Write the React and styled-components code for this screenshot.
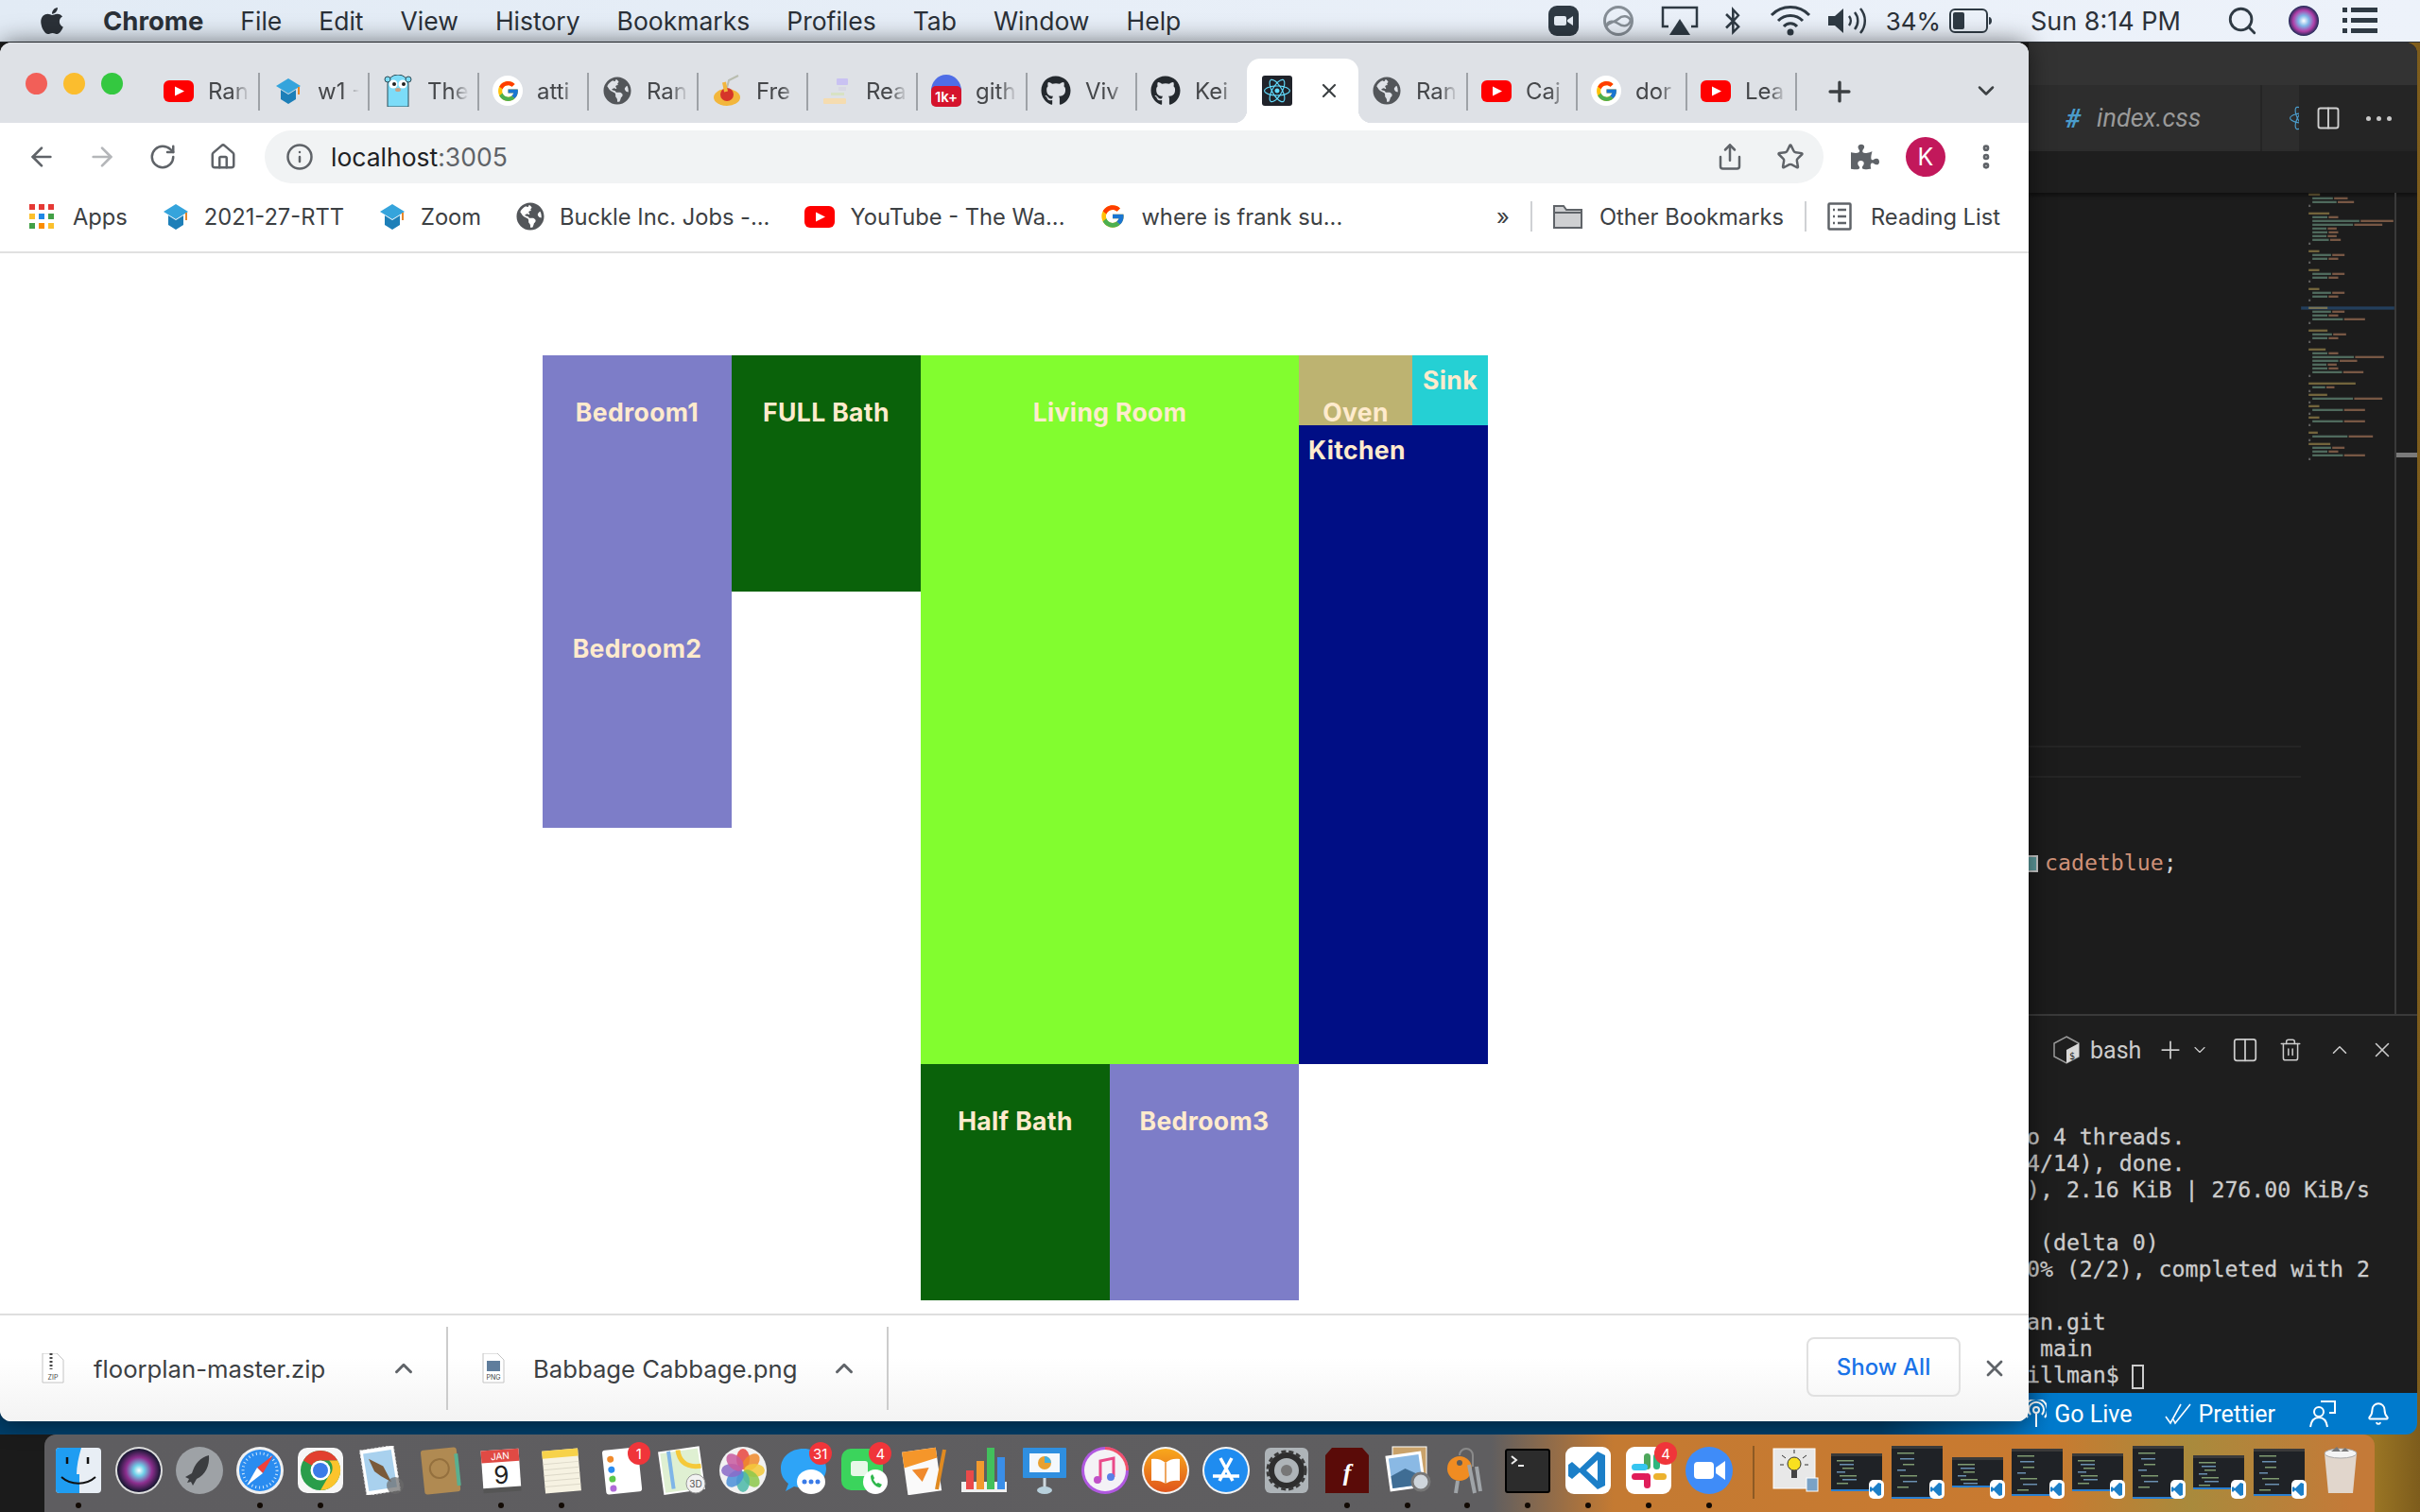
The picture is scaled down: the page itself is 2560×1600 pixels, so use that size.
import React from 'react';
import styled, { createGlobalStyle } from 'styled-components';
import {
    ArrowLeft, ArrowRight, RotateCw, House, Info, Star, Share, EllipsisVertical, Plus, ChevronDown, ChevronUp, X,
    Search, Bell, Columns2, Trash2,
} from 'lucide-react';
import { FaApple, FaGithub, FaPuzzlePiece, FaReact, FaGlobeAmericas, FaBluetoothB } from 'react-icons/fa';
import { FcGoogle } from 'react-icons/fc';

const GlobalStyle = createGlobalStyle`
    html, body { margin: 0; padding: 0; background: #1c1c1c; }
    body { width: 2560px; height: 1600px; overflow: hidden; font-family: Inter, "Noto Sans", sans-serif; }
    * { box-sizing: border-box; }
`;

const Desktop = styled.div`
    position: relative;
    width: 2560px;
    height: 1600px;
    overflow: hidden;
    background: linear-gradient(90deg, #1b1b1b 0, #1b1b1b 2300px, #9a7524 2512px, #7d5c1c 2560px);
`;

/* ---- mac menu bar ---- */
const MenuBar = styled.div`
    display: flex;
    align-items: center;
    height: 45px;
    padding: 0 45px 0 39px;
    background: linear-gradient(90deg, #e2ebf5, #edf2fa);
    border-bottom: 1px solid #2d3238;
    color: #2b3138;
    font-size: 26.5px;
`;
const MenuItem = styled.span`
    margin-left: ${(p) => p.$gap || 39}px;
    font-weight: ${(p) => (p.$bold ? 700 : 400)};
    font-size: ${(p) => (p.$bold ? 27.5 : 26.5)}px;
    white-space: nowrap;
`;
const Tray = styled.div`
    display: flex;
    align-items: center;
    margin-left: auto;
`;
const TraySlot = styled.span`
    display: flex;
    align-items: center;
    justify-content: center;
    margin-left: ${(p) => p.$gap || 0}px;
    font-size: ${(p) => p.$size || 27}px;
    white-space: nowrap;
`;

/* ---- vs code behind the browser ---- */
const StatusStrip = styled.div`
    position: absolute;
    left: 0;
    top: 1474px;
    width: 2557px;
    height: 44px;
    padding-right: 28px;
    display: flex;
    align-items: center;
    justify-content: flex-end;
    border-radius: 0 0 12px 0;
    color: #fff;
    font-family: Roboto, sans-serif;
    font-size: 25px;
    background: linear-gradient(90deg, #003e69 0, #003e69 1990px, #007acc 2170px);
`;
const StatusItem = styled.span`
    display: flex;
    align-items: center;
    gap: 8px;
    margin-left: ${(p) => p.$gap || 0}px;
`;
const CodeWindow = styled.div`
    position: absolute;
    left: 2146px;
    top: 45px;
    width: 411px;
    height: 1429px;
    display: flex;
    flex-direction: column;
    overflow: hidden;
    border-radius: 0 12px 0 0;
    background: #1e1e1e;
`;
const CodeTitle = styled.div`
    height: 45px;
    flex: none;
    background: #333;
`;
const CodeTabs = styled.div`
    height: 70px;
    flex: none;
    display: flex;
    background: #252525;
`;
const CodeTab = styled.div`
    width: 247px;
    padding-left: 39px;
    display: flex;
    align-items: center;
    gap: 17px;
    background: #2d2d2d;
    border-right: 2px solid #252525;
    color: #9a9a9a;
    font-family: Roboto, sans-serif;
    font-size: 27px;
    font-style: italic;
`;
const Hash = styled.span`
    color: #4a9ccb;
    font-weight: 700;
    font-style: italic;
    font-size: 28px;
`;
const NextTab = styled.div`
    width: 39px;
    display: flex;
    align-items: center;
    justify-content: flex-end;
    background: #2d2d2d;
    overflow: hidden;
    color: #4a9ccb;
`;
const TabActions = styled.div`
    flex: 1;
    display: flex;
    align-items: center;
    padding-left: 17px;
    gap: 26px;
    color: #d0d0d0;
`;
const Dots = styled.span`
    display: flex;
    gap: 6px;
`;
const Dot = styled.i`
    width: 5px;
    height: 5px;
    border-radius: 50%;
    background: #c8c8c8;
`;
const Crumbs = styled.div`
    height: 44px;
    flex: none;
    background: #1e1e1e;
    box-shadow: 0 3px 4px rgba(0, 0, 0, 0.45);
    position: relative;
`;
const Editor = styled.div`
    height: 871px;
    flex: none;
    display: flex;
    background: #1c1c1c;
    border-bottom: 2px solid #3a3a3a;
`;
const EditorText = styled.div`
    width: 288px;
    flex: none;
    padding-top: 695px;
    font-family: "DejaVu Sans Mono", monospace;
    font-size: 23.2px;
    line-height: 28px;
    color: #d4d4d4;
    background: linear-gradient(180deg, #252525 0, #252525 2px, transparent 2px, transparent 32px, #252525 32px) 0 585px / 100% 34px no-repeat;
`;
const Swatch = styled.i`
    display: inline-block;
    width: 10px;
    height: 18px;
    margin-right: 7px;
    vertical-align: -2px;
    background: #5f9ea0;
    border: 2px solid #ccc;
    border-left: 0;
`;
const CssValue = styled.span`
    color: #ce9178;
`;
const MiniMap = styled.svg`
    width: 99px;
    height: 300px;
    flex: none;
`;
const ScrollGutter = styled.div`
    flex: 1;
    position: relative;
    border-left: 2px solid #3a3a3a;
    &::after {
        content: '';
        position: absolute;
        left: 0;
        right: 0;
        top: 275px;
        height: 5px;
        background: #7a7a7a;
    }
`;
const PanelBar = styled.div`
    height: 72px;
    flex: none;
    display: flex;
    align-items: center;
    padding-left: 26px;
    color: #ccc;
    font-family: Roboto, sans-serif;
    font-size: 25px;
`;
const PanelSlot = styled.span`
    display: flex;
    align-items: center;
    margin-left: ${(p) => p.$gap || 0}px;
`;
const Terminal = styled.pre`
    flex: 1;
    margin: 0 0 0 -2px;
    padding: 42px 0 0 0;
    font-family: "DejaVu Sans Mono", monospace;
    font-size: 23.2px;
    line-height: 28px;
    color: #cccccc;
    -webkit-text-stroke: 0.3px #cccccc;
`;
const Cursor = styled.i`
    display: inline-block;
    width: 13px;
    height: 26px;
    margin-left: 13px;
    vertical-align: -7px;
    border: 2px solid #ccc;
`;

/* ---- chrome window ---- */
const ChromeWindow = styled.div`
    position: absolute;
    left: 0;
    top: 45px;
    width: 2146px;
    height: 1459px;
    display: flex;
    flex-direction: column;
    overflow: hidden;
    border-radius: 12px;
    background: #fff;
    box-shadow: 0 0 26px rgba(0, 0, 0, 0.55);
`;
const TabStrip = styled.div`
    height: 85px;
    flex: none;
    display: flex;
    align-items: flex-end;
    padding-left: 27px;
    background: #dee1e6;
`;
const Lights = styled.div`
    display: flex;
    gap: 17px;
    width: 132px;
    align-self: flex-start;
    margin-top: 32px;
`;
const Light = styled.span`
    width: 23px;
    height: 23px;
    border-radius: 50%;
    background: ${(p) => p.$color};
`;
const Tab = styled.div`
    position: relative;
    width: ${(p) => (p.$active ? 118 : 116)}px;
    height: 68px;
    flex: none;
    display: flex;
    align-items: center;
    gap: ${(p) => (p.$active ? 27 : 15)}px;
    padding-left: ${(p) => (p.$active ? 16 : 14)}px;
    border-radius: 14px 14px 0 0;
    background: ${(p) => (p.$active ? '#fff' : 'transparent')};
    color: #45474a;
    font-size: 24px;
    &::after {
        content: '';
        display: ${(p) => (p.$active || p.$noSep ? 'none' : 'block')};
        position: absolute;
        right: 0;
        top: 15px;
        height: 40px;
        width: 2px;
        background: #9ea2a7;
    }
`;
const Flare = styled.i`
    position: absolute;
    bottom: 0;
    ${(p) => (p.$side === 'left' ? 'left: -14px' : 'right: -14px')};
    width: 14px;
    height: 14px;
    background: radial-gradient(circle at ${(p) => (p.$side === 'left' ? '0 0' : '100% 0')}, transparent 14px, #fff 14.5px);
`;
const TabIcon = styled.span`
    width: 32px;
    height: 34px;
    flex: none;
    display: flex;
    align-items: center;
    justify-content: center;
`;
const TabTitle = styled.span`
    width: 44px;
    overflow: hidden;
    white-space: nowrap;
    -webkit-mask-image: linear-gradient(90deg, #000 58%, transparent 100%);
    mask-image: linear-gradient(90deg, #000 58%, transparent 100%);
`;
const NewTab = styled.span`
    margin: 0 0 16px 28px;
    display: flex;
    color: #3c4043;
`;
const TabMenu = styled.span`
    margin: 0 31px 20px auto;
    display: flex;
    color: #3c4043;
`;
const Toolbar = styled.div`
    height: 72px;
    flex: none;
    display: flex;
    align-items: center;
    padding-left: 12px;
    background: #fff;
    color: #5f6368;
`;
const ToolButton = styled.span`
    width: 64px;
    display: flex;
    justify-content: center;
    margin-left: ${(p) => (p.$push ? 'auto' : '0')};
    color: ${(p) => p.$color || '#5f6368'};
`;
const UrlBar = styled.div`
    width: 1649px;
    height: 56px;
    margin: 0 12px;
    padding: 0 3px 0 22px;
    display: flex;
    align-items: center;
    border-radius: 28px;
    background: #f1f3f4;
`;
const UrlText = styled.span`
    margin-left: 18px;
    font-size: 26.5px;
    color: #202124;
`;
const UrlPort = styled.span`
    color: #5f6368;
`;
const Avatar = styled.span`
    width: 42px;
    height: 42px;
    display: flex;
    align-items: center;
    justify-content: center;
    border-radius: 50%;
    background: #c2185b;
    color: #fff;
    font-size: 25px;
`;
const BookmarkBar = styled.div`
    height: 66px;
    flex: none;
    display: flex;
    align-items: center;
    gap: 37px;
    padding: 0 30px 10px 31px;
    border-bottom: 2px solid #e0e0e0;
    background: #fff;
    color: #3c4043;
    font-size: 23.7px;
`;
const Bookmark = styled.span`
    display: flex;
    align-items: center;
    gap: ${(p) => p.$gap || 16}px;
    white-space: nowrap;
    margin-left: ${(p) => (p.$push ? 'auto' : '0')};
`;
const BarRule = styled.i`
    width: 2px;
    height: 32px;
    margin: 0 -15px;
    background: #cfd1d4;
`;
const AppsGrid = styled.span`
    display: grid;
    grid-template-columns: repeat(3, 6px);
    grid-auto-rows: 6px;
    gap: 4px;
`;
const AppsDot = styled.i`
    background: ${(p) => p.$color};
`;

/* ---- the floor plan page ---- */
const Page = styled.div`
    flex: 1;
    overflow: hidden;
    background: #fff;
`;
const FloorPlan = styled.div`
    display: grid;
    grid-template-columns: repeat(5, 200px);
    grid-template-rows: repeat(4, 250px);
    width: 1000px;
    height: 1000px;
    margin: 108px 0 0 574px;
    text-align: center;
    color: #ffebcd;
`;
const Room = styled.div`
    grid-column: ${(p) => p.$col};
    grid-row: ${(p) => p.$row};
    background: ${(p) => p.$bg};
`;
const RoomName = styled.h5`
    margin: ${(p) => p.$margin || '44px 0'};
    font-size: 26.56px;
    font-weight: 700;
    line-height: 32px;
    letter-spacing: 0.35px;
    text-align: ${(p) => p.$align || 'center'};
`;
const Kitchen = styled.div`
    grid-column: 5;
    grid-row: 1 / 4;
    display: grid;
    grid-template-columns: 120px 80px;
    grid-template-rows: 74px 1fr;
    background: #000e85;
`;
const KitchenFloor = styled.div`
    grid-column: 1 / 3;
`;

/* ---- downloads shelf ---- */
const Shelf = styled.div`
    height: 114px;
    flex: none;
    display: flex;
    align-items: center;
    padding-right: 22px;
    border-top: 2px solid #dedede;
    background: linear-gradient(180deg, #fff 40%, #f3f3f3);
    color: #3c4043;
    font-size: 25.7px;
`;
const ShelfFile = styled.div`
    width: ${(p) => p.$width}px;
    height: 88px;
    display: flex;
    align-items: center;
    padding-left: ${(p) => p.$pad}px;
    border-right: 2px solid #ccc;
`;
const ShelfName = styled.span`
    margin-left: ${(p) => p.$gap}px;
    white-space: nowrap;
`;
const ShelfCaret = styled.span`
    display: flex;
    margin-left: auto;
    margin-right: ${(p) => p.$right}px;
    color: #5f6368;
`;
const ShowAll = styled.button`
    margin: 0 0 3px auto;
    width: 163px;
    height: 63px;
    border: 2px solid #e0e0e0;
    border-radius: 8px;
    background: transparent;
    color: #1a73e8;
    font: 500 24px Inter, sans-serif;
`;
const ShelfClose = styled.span`
    display: flex;
    margin-left: 22px;
    color: #5f6368;
`;

/* ---- dock ---- */
const Dock = styled.div`
    position: absolute;
    left: 47px;
    top: 1518px;
    width: 2465px;
    height: 82px;
    display: flex;
    padding: 12px 0 0 4px;
    border-radius: 12px 12px 0 0;
    background: linear-gradient(90deg, #5e5d60 0, #5f5e60 1530px, #c47a32 1660px, #c97a30 2120px, #a98a3c 2270px, #c47a38 2440px);
`;
const DockItem = styled.div`
    position: relative;
    width: 63.9px;
    flex: none;
    display: flex;
    flex-direction: column;
    align-items: center;
`;
const DockDot = styled.i`
    width: 6px;
    height: 6px;
    margin-top: 8px;
    border-radius: 50%;
    background: ${(p) => (p.$on ? '#120a04' : 'transparent')};
`;
const DockBadge = styled.span`
    position: absolute;
    top: -4px;
    right: 2px;
    min-width: 24px;
    height: 24px;
    display: flex;
    align-items: center;
    justify-content: center;
    border-radius: 12px;
    background: #f0353a;
    color: #fff;
    font-size: 15px;
`;
const DockRule = styled.i`
    width: 2px;
    height: 56px;
    margin: 0 13px 0 14px;
    flex: none;
    background: #8d5a24;
`;

const Yt = () => (
    <svg width="32" height="23" viewBox="0 0 32 23">
        <rect width="32" height="23" rx="6" fill="#f00" />
        <path d="M12 6.5 22 11.5 12 16.5z" fill="#fff" />
    </svg>
);
const Cap = () => (
    <svg width="28" height="30" viewBox="0 0 28 30">
        <path d="M14 2 27 10 14 18 1 10z" fill="#35a4dc" />
        <path d="M6 14 14 19 22 14V24L14 29 6 24z" fill="#1d7fb8" />
        <path d="M24 11h2v8h-2z" fill="#e8872a" />
    </svg>
);
const Gopher = () => (
    <svg width="30" height="34" viewBox="0 0 30 34">
        <path d="M4 10a11 10 0 0 1 22 0V34H4z" fill="#7cdcf8" stroke="#2b4a55" />
        <circle cx="4" cy="5" r="3" fill="#7cdcf8" stroke="#2b4a55" />
        <circle cx="26" cy="5" r="3" fill="#7cdcf8" stroke="#2b4a55" />
        <circle cx="10" cy="10" r="4.5" fill="#fff" />
        <circle cx="20" cy="10" r="4.5" fill="#fff" />
        <circle cx="11" cy="10" r="2" fill="#222" />
        <circle cx="21" cy="10" r="2" fill="#222" />
        <ellipse cx="15" cy="16" rx="3" ry="2" fill="#c9a184" />
    </svg>
);
const GoogleDot = styled.span`
    width: 32px;
    height: 32px;
    display: flex;
    align-items: center;
    justify-content: center;
    border-radius: 50%;
    background: #fff;
`;
const Google = () => (
    <GoogleDot>
        <FcGoogle size={25} />
    </GoogleDot>
);
const Globe = () => <FaGlobeAmericas size={30} color="#53565a" />;
const Pasta = () => (
    <svg width="30" height="34" viewBox="0 0 30 34">
        <path d="M14 18 17 6 27 1" fill="none" stroke="#b9bdb0" strokeWidth="2" />
        <ellipse cx="15" cy="24" rx="14" ry="9" fill="#f2b63c" />
        <circle cx="15" cy="21" r="7" fill="#d6352a" />
        <path d="M12 8 14 18" stroke="#f2b63c" strokeWidth="4" />
    </svg>
);
const Rea = () => (
    <svg width="32" height="32" viewBox="0 0 32 32">
        <rect x="16" y="3" width="12" height="7" rx="1" fill="#c9c2f2" />
        <rect x="18" y="12" width="8" height="4" fill="#d8d8e4" />
        <rect x="10" y="18" width="14" height="3" fill="#d7e2c4" />
        <rect x="2" y="24" width="24" height="6" rx="1" fill="#f5dcb0" />
    </svg>
);
const OneK = styled.span`
    position: absolute;
    left: 0;
    bottom: 0;
    width: 32px;
    height: 22px;
    display: flex;
    align-items: center;
    justify-content: center;
    border-radius: 5px;
    background: #d5132c;
    color: #fff;
    font-size: 15px;
    font-weight: 600;
`;
const GitBubble = styled.span`
    position: relative;
    width: 32px;
    height: 34px;
    border-radius: 50%;
    background: #4f6de6;
`;
const Notify = () => (
    <GitBubble>
        <OneK>1k+</OneK>
    </GitBubble>
);
const ReactIcon = styled.span`
    width: 32px;
    height: 32px;
    display: flex;
    align-items: center;
    justify-content: center;
    background: #20232a;
    border-radius: 3px;
    color: #61dafb;
`;

const tabs = [
    [<Yt />, 'Ran'], [<Cap />, 'w1 -'], [<Gopher />, 'The'], [<Google />, 'atti'], [<Globe />, 'Ran'],
    [<Pasta />, 'Fre'], [<Rea />, 'Rea'], [<Notify />, 'gith'], [<FaGithub size={32} color="#24292e" />, 'Viv'],
    [<FaGithub size={32} color="#24292e" />, 'Kei'],
];
const tabsAfter = [[<Globe />, 'Ran'], [<Yt />, 'Caj'], [<Google />, 'dor'], [<Yt />, 'Lea']];
const appsColors = ['#e53935', '#e53935', '#e53935', '#fbc02d', '#1e88e5', '#43a047', '#43a047', '#fb8c00', '#fbc02d'];

const ZoomTray = () => (
    <svg width="32" height="32" viewBox="0 0 32 32">
        <rect width="32" height="32" rx="9" fill="#2f3a44" />
        <rect x="6" y="11" width="13" height="10" rx="2" fill="#e6edf5" />
        <path d="M20 15 26 11V21L20 17z" fill="#e6edf5" />
    </svg>
);
const CloudTray = () => (
    <svg width="38" height="32" viewBox="0 0 38 32" fill="none" stroke="#868e96" strokeWidth="3">
        <circle cx="19" cy="16" r="14.500" />
        <path d="M6 22c2-7 9-6 13-3s10 4 13-3c-2-6-9-6-13-2s-10 3-13 8z" strokeWidth="2.500" />
    </svg>
);
const AirplayTray = () => (
    <svg width="40" height="32" viewBox="0 0 40 32" fill="none">
        <path d="M8 22H2V2H38V22H32" stroke="#2f3a44" strokeWidth="2.5" />
        <path d="M20 14 31 31H9z" fill="#2f3a44" />
    </svg>
);
const WifiTray = () => (
    <svg width="44" height="32" viewBox="0 0 44 32" fill="none" stroke="#2f3a44" strokeWidth="3">
        <path d="M2 10a28 28 0 0 1 40 0M9 16a18 18 0 0 1 26 0M15 22a9 9 0 0 1 14 0" />
        <circle cx="22" cy="28" r="2" fill="#2f3a44" />
    </svg>
);
const VolumeTray = () => (
    <svg width="42" height="32" viewBox="0 0 42 32" fill="none" stroke="#2f3a44" strokeWidth="2.5">
        <path d="M1 11H8L17 3V29L8 21H1z" fill="#2f3a44" stroke="none" />
        <path d="M23 11a8 8 0 0 1 0 10M29 7a14 14 0 0 1 0 18M35 3a20 20 0 0 1 0 26" />
    </svg>
);
const BatteryTray = () => (
    <svg width="45" height="26" viewBox="0 0 45 26">
        <rect x="1" y="1" width="39" height="24" rx="5" fill="none" stroke="#2f3a44" strokeWidth="2" />
        <rect x="4" y="4" width="12" height="18" rx="2" fill="#2f3a44" />
        <path d="M42 9c2 0 3 2 3 4s-1 4-3 4z" fill="#2f3a44" />
    </svg>
);
const SiriTray = () => (
    <svg width="32" height="32" viewBox="0 0 32 32">
        <defs>
            <radialGradient id="siriTray">
                <stop offset="0" stopColor="#fff" />
                <stop offset="0.35" stopColor="#7fb6e8" />
                <stop offset="0.7" stopColor="#b03ea8" />
                <stop offset="1" stopColor="#1c2a55" />
            </radialGradient>
        </defs>
        <circle cx="16" cy="16" r="16" fill="url(#siriTray)" />
    </svg>
);
const ListTray = () => (
    <svg width="37" height="28" viewBox="0 0 37 28" fill="#2f3a44">
        <rect width="5" height="5" />
        <rect y="11" width="5" height="5" />
        <rect y="22" width="5" height="5" />
        <rect x="9" width="28" height="5" />
        <rect x="9" y="11" width="28" height="5" />
        <rect x="9" y="22" width="28" height="5" />
    </svg>
);
const FolderIcon = () => (
    <svg width="31" height="26" viewBox="0 0 31 26">
        <path d="M1 2H11L14 6H30V25H1z" fill="#cfd0d2" stroke="#5f6368" strokeWidth="2" />
        <path d="M1 9H30" stroke="#5f6368" strokeWidth="2" />
    </svg>
);
const ReadingIcon = () => (
    <svg width="26" height="30" viewBox="0 0 26 30" fill="none" stroke="#5f6368" strokeWidth="2.5">
        <rect x="1.5" y="1.5" width="23" height="27" rx="1" />
        <path d="M6 8h2M11 8h9M6 15h2M11 15h9M6 22h2M11 22h9" />
    </svg>
);
const FileIcon = ({ label, zip }) => (
    <svg width="24" height="32" viewBox="0 0 24 32">
        <path d="M1 0H16L23 7V31H1z" fill="#fff" stroke="#c4c4c4" />
        {zip ? <path d="M10 0V17" stroke="#444" strokeWidth="3" strokeDasharray="2 2" /> : <rect x="5" y="8" width="14" height="11" fill="#5f7d9c" />}
        <text x="12" y="28" fontSize="7" textAnchor="middle" fill="#444" fontFamily="Inter">{label}</text>
    </svg>
);
const BashIcon = () => (
    <svg width="28" height="30" viewBox="0 0 28 30">
        <path d="M14 1 27 8V22L14 29 1 22V8z" fill="none" stroke="#9a9a9a" strokeWidth="1.5" />
        <path d="M14 15 27 8V22L14 29z" fill="#d8d8d8" />
        <text x="17" y="25" fontSize="10" fill="#222" fontFamily="DejaVu Sans Mono">$</text>
    </svg>
);
const PersonFeedback = () => (
    <svg width="28" height="30" viewBox="0 0 28 30" fill="none" stroke="#fff" strokeWidth="2">
        <circle cx="10" cy="13" r="5" />
        <path d="M1 29c1-7 4-10 9-10s8 3 9 10M12 2H27V14H21" />
    </svg>
);
const GoLiveIcon = () => (
    <svg width="22" height="30" viewBox="0 0 22 30" fill="none" stroke="#fff" strokeWidth="2">
        <circle cx="11" cy="11" r="3" />
        <path d="M5 16a8 8 0 1 1 12 0M2 19a12 12 0 1 1 18 0M11 15V29" />
    </svg>
);
const DoubleCheck = () => (
    <svg width="28" height="24" viewBox="0 0 28 24" fill="none" stroke="#fff" strokeWidth="1.6">
        <path d="M1 15 6 22 17 2M9 18 11 22 27 2" />
    </svg>
);

const mmRows = [
    [378, 0, 972], [390, 1, 1060], [402, 1, 1080], [414, 2, 942], [438, 0, 1002], [450, 1, 1030], [462, 1, 1205],
    [474, 1, 1170], [486, 1, 1025], [498, 1, 1030], [510, 1, 1025], [522, 1, 1038], [534, 2, 942], [558, 0, 970],
    [570, 1, 1050], [582, 1, 1030], [594, 2, 942], [618, 0, 970], [630, 1, 1050], [642, 1, 1030], [654, 2, 942],
    [678, 0, 970], [690, 1, 1050], [702, 1, 1030], [714, 2, 942], [738, 0, 996], [750, 1, 1050], [762, 1, 1030],
    [774, 1, 1115], [786, 2, 942], [810, 0, 996], [822, 1, 1055], [834, 1, 1030], [846, 2, 942], [870, 0, 990],
    [882, 1, 1030], [894, 1, 1175], [906, 1, 1090], [918, 1, 1025], [930, 1, 1030], [942, 1, 1110], [954, 2, 942],
    [978, 0, 1085], [990, 1, 1018], [1002, 2, 942], [1014, 0, 995], [1026, 1, 1170], [1038, 2, 942], [1050, 0, 970],
    [1062, 1, 1115], [1074, 2, 942], [1086, 0, 970], [1098, 1, 1115], [1110, 2, 942], [1134, 0, 965], [1146, 1, 1140],
    [1158, 2, 942], [1170, 0, 1005], [1182, 1, 1050], [1194, 1, 1030], [1206, 1, 1115], [1218, 2, 942],
];
const MiniMapArt = () => (
    <MiniMap viewBox="912 372 296 900">
        <rect x="912" y="733" width="296" height="10" fill="#264f78" opacity="0.7" />
        <g opacity="0.62">
            {mmRows.map(([y, kind, end]) => {
                const start = kind === 1 ? 948 : 936;
                const split = kind === 1 ? start + (end - start) * 0.58 : end;
                return (
                    <g key={y}>
                        <rect x={start} y={y - 4} width={split - start} height="7" fill={kind === 0 ? '#a89050' : kind === 1 ? '#6f9a85' : '#8a8a8a'} />
                        {kind === 1 && <rect x={split + 4} y={y - 4} width={end - split - 4} height="7" fill="#b07c5e" />}
                    </g>
                );
            })}
        </g>
    </MiniMap>
);

/* dock icons, all on a 52 box */
const Ic = ({ children, defs }) => (
    <svg width="52" height="52" viewBox="0 0 52 52">
        {defs && <defs>{defs}</defs>}
        {children}
    </svg>
);
const petals = ['#e8473f', '#f08a2c', '#f5c93a', '#8cc84b', '#4bb8a8', '#4a8fd8', '#8a6ac8', '#c85aa0'];
const dockIcons = {
    finder: (
        <Ic>
            <rect x="2" y="2" width="48" height="48" rx="4" fill="#e8eef5" />
            <path d="M6 2H29C26 12 24 22 24 30H27V50H6a4 4 0 0 1-4-4V6a4 4 0 0 1 4-4z" fill="#1f9df2" />
            <path d="M14 12v7M36 12v7" stroke="#111" strokeWidth="2.5" />
            <path d="M8 33c10 9 26 9 36 0" fill="none" stroke="#111" strokeWidth="2" />
        </Ic>
    ),
    siri: (
        <Ic defs={<radialGradient id="dSiri"><stop offset="0" stopColor="#fff" /><stop offset="0.25" stopColor="#6fd0e8" /><stop offset="0.6" stopColor="#8d2f8f" /><stop offset="1" stopColor="#13162e" /></radialGradient>}>
            <circle cx="26" cy="26" r="25" fill="#ddd" />
            <circle cx="26" cy="26" r="23" fill="url(#dSiri)" />
        </Ic>
    ),
    launchpad: (
        <Ic>
            <circle cx="26" cy="26" r="25" fill="#9ea2a6" />
            <path d="M36 10c-9 2-15 9-18 19l-7 4 4 2-2 4 4-1 2 4 4-7c9-4 14-14 13-25z" fill="#3b3d40" />
        </Ic>
    ),
    safari: (
        <Ic>
            <circle cx="26" cy="26" r="25" fill="#f0f0f0" />
            <circle cx="26" cy="26" r="22" fill="#2a8cf0" />
            <circle cx="26" cy="26" r="18" fill="none" stroke="#cfe6fb" strokeWidth="3" strokeDasharray="1 3" />
            <path d="M40 10 23 23 29 29z" fill="#f0403a" />
            <path d="M12 42 23 23 29 29z" fill="#fff" />
        </Ic>
    ),
    chrome: (
        <Ic>
            <rect x="2" y="2" width="48" height="48" rx="10" fill="#f6f6f6" />
            <circle cx="26" cy="26" r="21" fill="#2a9d4b" />
            <path d="M26 5a21 21 0 0 1 18.2 10.5H26a10.500 10.500 0 0 0-9.100 5.250L8 15.500A21 21 0 0 1 26 5z" fill="#e2402f" />
            <path d="M44.200 15.500A21 21 0 0 1 26 47l9.100-15.750a10.500 10.500 0 0 0 0-15.750z" fill="#fbc42c" />
            <circle cx="26" cy="26" r="10.500" fill="#fff" />
            <circle cx="26" cy="26" r="8" fill="#3a7be8" />
        </Ic>
    ),
    mail: (
        <Ic>
            <g transform="rotate(-9 26 26)">
                <rect x="8" y="2" width="36" height="48" fill="#fff" stroke="#ddd" strokeDasharray="2 2" />
                <rect x="11" y="6" width="30" height="40" fill="#a9d1ee" />
                <path d="M16 12 30 22 36 40 26 32 20 26z" fill="#7a5a3a" />
            </g>
            <circle cx="42" cy="42" r="9" fill="#6a6a6a" opacity="0.7" />
        </Ic>
    ),
    contacts: (
        <Ic>
            <g transform="rotate(-6 26 26)">
                <rect x="7" y="3" width="38" height="47" rx="3" fill="#b08a52" />
                <rect x="42" y="10" width="4" height="34" fill="#5ab090" />
                <circle cx="25" cy="24" r="10" fill="none" stroke="#94703e" strokeWidth="2" />
            </g>
        </Ic>
    ),
    calendar: (
        <Ic>
            <g transform="rotate(-4 26 26)">
                <rect x="6" y="5" width="40" height="44" fill="#555" />
                <rect x="6" y="4" width="40" height="40" fill="#fff" />
                <rect x="6" y="4" width="40" height="13" fill="#e04a44" />
                <text x="26" y="14.500" textAnchor="middle" fontSize="10" fill="#fff" fontFamily="Inter">JAN</text>
                <text x="26" y="40" textAnchor="middle" fontSize="26" fill="#222" fontFamily="Inter">9</text>
            </g>
        </Ic>
    ),
    notes: (
        <Ic>
            <g transform="rotate(-5 26 26)">
                <rect x="7" y="4" width="38" height="45" fill="#f6f2e2" />
                <rect x="7" y="4" width="38" height="8" fill="#f7d24a" />
                <path d="M7 18H45M7 24H45M7 30H45M7 36H45M7 42H45" stroke="#dcd8c8" />
            </g>
        </Ic>
    ),
    reminders: (
        <Ic>
            <g transform="rotate(-6 26 26)">
                <rect x="7" y="3" width="38" height="47" rx="3" fill="#fff" />
                <circle cx="15" cy="13" r="3.500" fill="#f08a2c" />
                <circle cx="15" cy="24" r="3.500" fill="#2a8cf0" />
                <circle cx="15" cy="34" r="3.500" fill="#5cc84b" />
                <circle cx="15" cy="44" r="3.500" fill="#b06ad8" />
            </g>
        </Ic>
    ),
    maps: (
        <Ic>
            <g transform="rotate(-8 26 26)">
                <rect x="4" y="4" width="42" height="44" fill="#dff0d2" stroke="#fff" strokeWidth="2" />
                <path d="M24 4c0 14 8 20 22 20" fill="none" stroke="#f5c93a" strokeWidth="5" />
                <path d="M14 4V44" stroke="#7fb5e8" strokeWidth="4" />
            </g>
            <circle cx="40" cy="40" r="10" fill="#f2f2f2" stroke="#999" />
            <text x="40" y="44" textAnchor="middle" fontSize="10" fill="#555" fontFamily="Inter">3D</text>
        </Ic>
    ),
    photos: (
        <Ic>
            <circle cx="26" cy="26" r="25" fill="#f2f2f2" />
            {petals.map((c, i) => (
                <ellipse key={c} cx="26" cy="14" rx="7" ry="11" fill={c} opacity="0.85" transform={`rotate(${i * 45} 26 26)`} />
            ))}
        </Ic>
    ),
    messages: (
        <Ic>
            <path d="M26 3C12 3 2 12 2 24c0 7 3 12 8 16l-3 8 9-5c3 1 6 1 10 1 14 0 24-9 24-20S40 3 26 3z" fill="#2ea4f7" />
            <ellipse cx="34" cy="38" rx="15" ry="13" fill="#fff" />
            <circle cx="27" cy="38" r="2.500" fill="#3a7be8" />
            <circle cx="34" cy="38" r="2.500" fill="#3a7be8" />
            <circle cx="41" cy="38" r="2.500" fill="#3a7be8" />
        </Ic>
    ),
    facetime: (
        <Ic>
            <rect x="2" y="3" width="44" height="44" rx="10" fill="#3bd45c" />
            <rect x="12" y="16" width="18" height="16" rx="3" fill="#e8f8e8" />
            <ellipse cx="38" cy="38" rx="13" ry="13" fill="#fff" />
            <path d="M33 32c0 6 5 12 10 12l2-3-4-2-2 1-3-4 1-2-2-4z" fill="#2fb84c" />
        </Ic>
    ),
    pages: (
        <Ic>
            <g transform="rotate(-8 24 26)">
                <rect x="6" y="4" width="36" height="46" fill="#fafafa" />
                <path d="M6 4H42V15L6 21z" fill="#f5962a" />
                <path d="M14 24H32L23 38z" fill="#f08a2c" />
            </g>
            <path d="M48 4 40 46" stroke="#e08a20" strokeWidth="4" />
        </Ic>
    ),
    numbers: (
        <Ic>
            <path d="M2 38H50V49H2z" fill="#f0f0f0" />
            <rect x="7" y="26" width="8" height="20" fill="#ea4a4a" />
            <rect x="18" y="16" width="8" height="30" fill="#f29a2e" />
            <rect x="29" y="2" width="8" height="44" fill="#42c05c" />
            <rect x="40" y="12" width="8" height="34" fill="#3a8ee8" />
        </Ic>
    ),
    keynote: (
        <Ic>
            <rect x="3" y="2" width="46" height="32" rx="1" fill="#2f8fe0" />
            <rect x="10" y="8" width="32" height="20" fill="#f4f8fc" />
            <circle cx="26" cy="18" r="7" fill="#e8a030" />
            <path d="M26 18V11A7 7 0 0 1 33 18z" fill="#42b0e0" />
            <path d="M26 34V46" stroke="#cfd8de" strokeWidth="3" />
            <ellipse cx="26" cy="47" rx="8" ry="4" fill="#b8d0dc" />
        </Ic>
    ),
    itunes: (
        <Ic>
            <circle cx="26" cy="26" r="25" fill="#b058e0" />
            <path d="M26 1a25 25 0 0 1 25 25H26z" fill="#f0506a" />
            <circle cx="26" cy="26" r="22" fill="#f4f2f6" />
            <path d="M21 36V16l14-3v20" fill="none" stroke="#ea4a8a" strokeWidth="3" />
            <circle cx="18" cy="36" r="4" fill="#c050c8" />
            <circle cx="32" cy="33" r="4" fill="#5a80e8" />
        </Ic>
    ),
    books: (
        <Ic defs={<linearGradient id="dBooks" x1="0" x2="0" y1="0" y2="1"><stop offset="0" stopColor="#f8a81c" /><stop offset="1" stopColor="#e0561c" /></linearGradient>}>
            <circle cx="26" cy="26" r="25" fill="#f4f4f4" />
            <circle cx="26" cy="26" r="23" fill="url(#dBooks)" />
            <path d="M26 18c-4-4-10-5-15-4v23c5-1 11 0 15 3 4-3 10-4 15-3V14c-5-1-11 0-15 4z" fill="#fff" />
            <path d="M26 18V40" stroke="#e88a2c" strokeWidth="1.500" />
        </Ic>
    ),
    appstore: (
        <Ic>
            <circle cx="26" cy="26" r="25" fill="#f4f4f4" />
            <circle cx="26" cy="26" r="23" fill="#1f8cf0" />
            <path d="M19 37 32 13M33 37 20 13M12 32H40" stroke="#fff" strokeWidth="3.500" />
        </Ic>
    ),
    prefs: (
        <Ic>
            <rect x="3" y="2" width="46" height="48" rx="6" fill="#aeb4b8" />
            <circle cx="26" cy="26" r="16" fill="none" stroke="#2e2e2e" strokeWidth="6" />
            <circle cx="26" cy="26" r="20" fill="none" stroke="#3a3a3a" strokeWidth="3" strokeDasharray="5 3" />
            <circle cx="26" cy="26" r="6" fill="#777" />
        </Ic>
    ),
    flash: (
        <Ic>
            <path d="M10 2H42L49 10V50H3V10z" fill="#5a0b08" />
            <text x="26" y="37" textAnchor="middle" fontSize="26" fontStyle="italic" fontWeight="700" fill="#fff" fontFamily="Liberation Serif">f</text>
        </Ic>
    ),
    preview: (
        <Ic>
            <rect x="10" y="1" width="36" height="38" fill="#c9a26a" stroke="#fff" />
            <g transform="rotate(-8 24 28)">
                <rect x="5" y="8" width="38" height="38" fill="#fff" />
                <rect x="8" y="11" width="32" height="32" fill="#8ab9e4" />
                <path d="M8 30 24 24 40 34V43H8z" fill="#3f6d94" />
            </g>
            <circle cx="40" cy="38" r="9" fill="#cfd6dc" stroke="#777" strokeWidth="3" />
        </Ic>
    ),
    keychain: (
        <Ic>
            <path d="M32 22V10a7 7 0 0 0-14 0" fill="none" stroke="#8a8a8a" strokeWidth="2" />
            <circle cx="18" cy="24" r="13" fill="#f08c22" />
            <circle cx="18" cy="18" r="3" fill="#5c5c5c" />
            <path d="M28 20 34 50M36 22 40 48M16 37 14 50" stroke="#9fa4a8" strokeWidth="4" />
        </Ic>
    ),
    terminal: (
        <Ic>
            <rect x="2" y="3" width="48" height="46" rx="3" fill="#f0f0f0" opacity="0.25" />
            <rect x="3" y="4" width="46" height="45" rx="2" fill="#2c2c2c" stroke="#000" strokeWidth="2" />
            <path d="M9 11 14 15 9 19M16 21H22" fill="none" stroke="#eee" strokeWidth="2" />
        </Ic>
    ),
    vscode: (
        <Ic>
            <rect x="2" y="1" width="48" height="50" rx="9" fill="#fff" />
            <path d="M36 6 44 10V42L36 46 17 28 9 35 5 32V20L9 17 17 24z" fill="#1c7fc8" />
            <path d="M36 15 24 26 36 37z" fill="#fff" />
        </Ic>
    ),
    slack: (
        <Ic>
            <rect x="2" y="1" width="48" height="50" rx="9" fill="#fff" />
            <rect x="21" y="8" width="7" height="17" rx="3.500" fill="#4ea75c" />
            <rect x="8" y="19" width="17" height="7" rx="3.500" fill="#36c5f0" />
            <rect x="8" y="29" width="17" height="7" rx="3.500" fill="#e01e5a" />
            <rect x="21" y="29" width="7" height="16" rx="3.500" fill="#e01e5a" />
            <rect x="31" y="8" width="7" height="17" rx="3.500" fill="#2eb67d" />
            <rect x="31" y="29" width="14" height="7" rx="3.500" fill="#ecb22e" />
        </Ic>
    ),
    zoom: (
        <Ic>
            <circle cx="26" cy="26" r="25" fill="#3f8cf8" />
            <rect x="10" y="17" width="21" height="18" rx="4" fill="#fff" />
            <path d="M33 23 43 16V36L33 29z" fill="#fff" />
        </Ic>
    ),
    bulb: (
        <Ic>
            <rect x="1" y="3" width="44" height="42" fill="#e8e8e8" stroke="#fff" />
            <circle cx="23" cy="19" r="7" fill="#f8e020" stroke="#333" />
            <rect x="20" y="26" width="6" height="8" fill="#444" />
            <path d="M23 4V8M10 10 14 13M36 10 32 13M8 20H12M34 20H38" stroke="#333" />
            <rect x="36" y="34" width="12" height="14" fill="#7aa2c6" stroke="#fff" />
        </Ic>
    ),
    trash: (
        <Ic>
            <path d="M9 8H43L39 50H13z" fill="#e6e6e6" opacity="0.85" />
            <ellipse cx="26" cy="8" rx="17" ry="5" fill="#f4f4f4" stroke="#aaa" />
            <path d="M16 6l6-5 4 5 5-4 4 4" fill="#777" />
        </Ic>
    ),
};

const Thumb = ({ height, tall }) => (
    <svg width="60" height="56" viewBox="0 0 60 56">
        <rect x="2" y={(56 - height) / 2} width="54" height={height} fill="#1f2226" />
        <rect x="2" y={(56 - height) / 2} width="54" height="3" fill="#3a3a3a" />
        {[0, 1, 2, 3, 4, 5, 6].map((i) => (
            <rect key={i} x={8 + (i % 3) * 3} y={(56 - height) / 2 + 7 + i * (tall ? 6 : 4)} width={18 - (i % 4) * 3} height="1.500" fill={i % 2 ? '#6a8fb0' : '#7f9a70'} />
        ))}
        <rect x="2" y={(56 - height) / 2 + height - 2} width="54" height="2" fill="#2a7fd0" />
        <rect x="42" y="36" width="16" height="20" rx="5" fill="#fff" />
        <path d="M52 39 55 40V52L52 53 46 47 44 49 43 48V44L44 43 46 45z" fill="#1c7fc8" />
    </svg>
);

const apps = [
    ['finder', true], ['siri'], ['launchpad'], ['safari', true], ['chrome', true], ['mail'], ['contacts'],
    ['calendar', true], ['notes', true], ['reminders', false, '1'], ['maps'], ['photos'], ['messages', false, '31'],
    ['facetime', false, '4'], ['pages'], ['numbers'], ['keynote'], ['itunes'], ['books'], ['appstore'], ['prefs'],
    ['flash', true], ['preview', true], ['keychain', true], ['terminal', true], ['vscode', true], ['slack', true, '4'],
    ['zoom', true],
];
const thumbs = [[40, false], [56, true], [32, false], [50, true], [40, false], [56, true], [36, false], [50, true]];

const App = () => {
    return (
        <Desktop>
            <GlobalStyle />
            <StatusStrip>
                <StatusItem><GoLiveIcon />Go Live</StatusItem>
                <StatusItem $gap={34}><DoubleCheck />Prettier</StatusItem>
                <StatusItem $gap={36}><PersonFeedback /></StatusItem>
                <StatusItem $gap={32}><Bell size={26} strokeWidth={1.8} /></StatusItem>
            </StatusStrip>

            <CodeWindow>
                <CodeTitle />
                <CodeTabs>
                    <CodeTab><Hash>#</Hash>index.css</CodeTab>
                    <NextTab><FaReact size={28} style={{ marginRight: -18 }} /></NextTab>
                    <TabActions>
                        <Columns2 size={28} strokeWidth={1.6} />
                        <Dots><Dot /><Dot /><Dot /></Dots>
                    </TabActions>
                </CodeTabs>
                <Crumbs />
                <Editor>
                    <EditorText>
                        <Swatch /><CssValue>cadetblue</CssValue>;
                    </EditorText>
                    <MiniMapArt />
                    <ScrollGutter />
                </Editor>
                <PanelBar>
                    <PanelSlot><BashIcon /></PanelSlot>
                    <PanelSlot $gap={11}>bash</PanelSlot>
                    <PanelSlot $gap={16}><Plus size={30} strokeWidth={1.4} /></PanelSlot>
                    <PanelSlot $gap={6}><ChevronDown size={20} strokeWidth={1.4} /></PanelSlot>
                    <PanelSlot $gap={23}><Columns2 size={30} strokeWidth={1.4} /></PanelSlot>
                    <PanelSlot $gap={20}><Trash2 size={26} strokeWidth={1.4} /></PanelSlot>
                    <PanelSlot $gap={26}><ChevronUp size={26} strokeWidth={1.4} /></PanelSlot>
                    <PanelSlot $gap={19}><X size={26} strokeWidth={1.4} /></PanelSlot>
                </PanelBar>
                <Terminal>
{`o 4 threads.
4/14), done.
), 2.16 KiB | 276.00 KiB/s

 (delta 0)
0% (2/2), completed with 2

an.git
 main
illman$`}<Cursor />
                </Terminal>
            </CodeWindow>

            <ChromeWindow>
                <TabStrip>
                    <Lights>
                        <Light $color="#f25f58" />
                        <Light $color="#fbbd2e" />
                        <Light $color="#34c840" />
                    </Lights>
                    {tabs.map(([icon, title], i) => (
                        <Tab key={i} $noSep={i === tabs.length - 1}>
                            <TabIcon>{icon}</TabIcon>
                            <TabTitle>{title}</TabTitle>
                        </Tab>
                    ))}
                    <Tab $active>
                        <Flare $side="left" />
                        <TabIcon><ReactIcon><FaReact size={28} /></ReactIcon></TabIcon>
                        <X size={24} strokeWidth={2.2} color="#3c4043" />
                        <Flare $side="right" />
                    </Tab>
                    {tabsAfter.map(([icon, title], i) => (
                        <Tab key={i}>
                            <TabIcon>{icon}</TabIcon>
                            <TabTitle>{title}</TabTitle>
                        </Tab>
                    ))}
                    <NewTab><Plus size={34} strokeWidth={2.4} /></NewTab>
                    <TabMenu><ChevronDown size={28} strokeWidth={2.2} /></TabMenu>
                </TabStrip>

                <Toolbar>
                    <ToolButton><ArrowLeft size={32} strokeWidth={2} /></ToolButton>
                    <ToolButton $color="#b4b6b9"><ArrowRight size={32} strokeWidth={2} /></ToolButton>
                    <ToolButton><RotateCw size={30} strokeWidth={2} /></ToolButton>
                    <ToolButton><House size={30} strokeWidth={2} /></ToolButton>
                    <UrlBar>
                        <Info size={30} strokeWidth={2} />
                        <UrlText>localhost<UrlPort>:3005</UrlPort></UrlText>
                        <ToolButton $push><Share size={30} strokeWidth={2} /></ToolButton>
                        <ToolButton><Star size={30} strokeWidth={2} /></ToolButton>
                    </UrlBar>
                    <ToolButton><FaPuzzlePiece size={30} /></ToolButton>
                    <ToolButton><Avatar>K</Avatar></ToolButton>
                    <ToolButton><EllipsisVertical size={32} strokeWidth={3} /></ToolButton>
                </Toolbar>

                <BookmarkBar>
                    <Bookmark $gap={20}>
                        <AppsGrid>
                            {appsColors.map((c, i) => <AppsDot key={i} $color={c} />)}
                        </AppsGrid>
                        Apps
                    </Bookmark>
                    <Bookmark><Cap />2021-27-RTT</Bookmark>
                    <Bookmark><Cap />Zoom</Bookmark>
                    <Bookmark><FaGlobeAmericas size={30} color="#53565a" />Buckle Inc. Jobs -...</Bookmark>
                    <Bookmark><Yt />YouTube - The Wa...</Bookmark>
                    <Bookmark><FcGoogle size={28} />where is frank su...</Bookmark>
                    <Bookmark $push>»</Bookmark>
                    <BarRule />
                    <Bookmark $gap={18}><FolderIcon />Other Bookmarks</Bookmark>
                    <BarRule />
                    <Bookmark $gap={20}><ReadingIcon />Reading List</Bookmark>
                </BookmarkBar>

                <Page>
                    <FloorPlan>
                        <Room $col="1" $row="1" $bg="#7d7dc8"><RoomName>Bedroom1</RoomName></Room>
                        <Room $col="2" $row="1" $bg="#0a620a"><RoomName>FULL Bath</RoomName></Room>
                        <Room $col="3 / 5" $row="1 / 4" $bg="#82fd2f"><RoomName>Living Room</RoomName></Room>
                        <Kitchen>
                            <Room $bg="#bdb371"><RoomName>Oven</RoomName></Room>
                            <Room $bg="#25d0d4"><RoomName $margin="10px">Sink</RoomName></Room>
                            <KitchenFloor><RoomName $margin="10px" $align="left">Kitchen</RoomName></KitchenFloor>
                        </Kitchen>
                        <Room $col="1" $row="2" $bg="#7d7dc8"><RoomName>Bedroom2</RoomName></Room>
                        <Room $col="3" $row="4" $bg="#0a620a"><RoomName>Half Bath</RoomName></Room>
                        <Room $col="4" $row="4" $bg="#7d7dc8"><RoomName>Bedroom3</RoomName></Room>
                    </FloorPlan>
                </Page>

                <Shelf>
                    <ShelfFile $width={474} $pad={44}>
                        <FileIcon label="ZIP" zip />
                        <ShelfName $gap={31}>floorplan-master.zip</ShelfName>
                        <ShelfCaret $right={30}><ChevronUp size={30} strokeWidth={2.4} /></ShelfCaret>
                    </ShelfFile>
                    <ShelfFile $width={466} $pad={36}>
                        <FileIcon label="PNG" />
                        <ShelfName $gap={30}>Babbage Cabbage.png</ShelfName>
                        <ShelfCaret $right={30}><ChevronUp size={30} strokeWidth={2.4} /></ShelfCaret>
                    </ShelfFile>
                    <ShowAll>Show All</ShowAll>
                    <ShelfClose><X size={28} strokeWidth={2.4} /></ShelfClose>
                </Shelf>
            </ChromeWindow>

            <MenuBar>
                <FaApple size={32} color="#2b3138" />
                <MenuItem $bold $gap={38}>Chrome</MenuItem>
                <MenuItem>File</MenuItem>
                <MenuItem>Edit</MenuItem>
                <MenuItem>View</MenuItem>
                <MenuItem>History</MenuItem>
                <MenuItem>Bookmarks</MenuItem>
                <MenuItem>Profiles</MenuItem>
                <MenuItem>Tab</MenuItem>
                <MenuItem>Window</MenuItem>
                <MenuItem>Help</MenuItem>
                <Tray>
                    <TraySlot><ZoomTray /></TraySlot>
                    <TraySlot $gap={23}><CloudTray /></TraySlot>
                    <TraySlot $gap={26}><AirplayTray /></TraySlot>
                    <TraySlot $gap={21}><FaBluetoothB size={30} color="#2f3a44" /></TraySlot>
                    <TraySlot $gap={24}><WifiTray /></TraySlot>
                    <TraySlot $gap={17}><VolumeTray /></TraySlot>
                    <TraySlot $gap={20} $size={26}>34%</TraySlot>
                    <TraySlot $gap={9}><BatteryTray /></TraySlot>
                    <TraySlot $gap={41}>Sun 8:14 PM</TraySlot>
                    <TraySlot $gap={48}><Search size={34} strokeWidth={2} color="#2f3a44" /></TraySlot>
                    <TraySlot $gap={32}><SiriTray /></TraySlot>
                    <TraySlot $gap={25}><ListTray /></TraySlot>
                </Tray>
            </MenuBar>

            <Dock>
                {apps.map(([name, dot, badge]) => (
                    <DockItem key={name}>
                        {dockIcons[name]}
                        {badge && <DockBadge>{badge}</DockBadge>}
                        <DockDot $on={dot} />
                    </DockItem>
                ))}
                <DockRule />
                <DockItem>{dockIcons.bulb}<DockDot /></DockItem>
                {thumbs.map(([h, tall], i) => (
                    <DockItem key={i}><Thumb height={h} tall={tall} /></DockItem>
                ))}
                <DockItem>{dockIcons.trash}<DockDot /></DockItem>
            </Dock>
        </Desktop>
    );
};

export default App;
